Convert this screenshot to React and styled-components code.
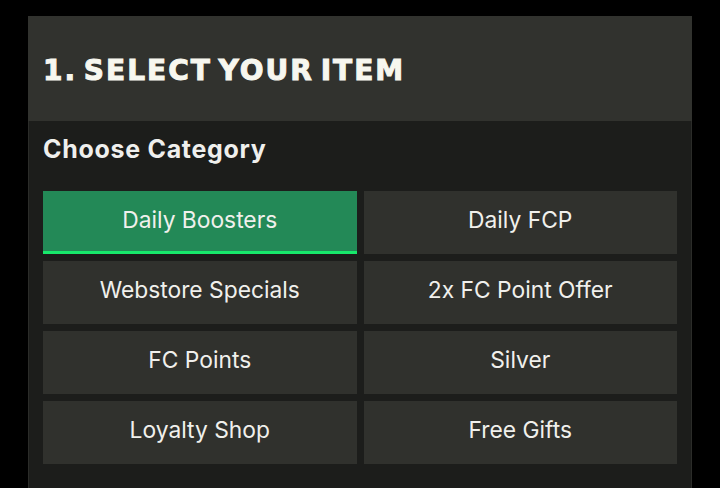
import React, { useState } from "react";
import styled, { createGlobalStyle } from "styled-components";

const GlobalStyle = createGlobalStyle`
  html, body {
    margin: 0;
    padding: 0;
    background: #000;
  }
  body {
    font-family: Inter, "Noto Sans", sans-serif;
  }
`;

const categories = [
  "Daily Boosters",
  "Daily FCP",
  "Webstore Specials",
  "2x FC Point Offer",
  "FC Points",
  "Silver",
  "Loyalty Shop",
  "Free Gifts",
];

export default function App() {
  const [active, setActive] = useState("Daily Boosters");

  return (
    <>
      <GlobalStyle />
      <Page>
        <Panel>
          <Header>
            <Title>1. SELECT YOUR ITEM</Title>
          </Header>
          <Body>
            <SubTitle>Choose Category</SubTitle>
            <Grid>
              {categories.map((c) => (
                <CategoryButton
                  key={c}
                  $active={c === active}
                  onClick={() => setActive(c)}
                >
                  {c}
                </CategoryButton>
              ))}
            </Grid>
          </Body>
        </Panel>
      </Page>
    </>
  );
}

const Page = styled.div`
  width: 720px;
  height: 488px;
  overflow: hidden;
  padding: 16px 28px 0 28px;
  box-sizing: border-box;
`;

const Panel = styled.div`
  width: 664px;
  display: flex;
  flex-direction: column;
`;

const Header = styled.div`
  background-color: #31322e;
  height: 105px;
  display: flex;
  align-items: center;
  padding: 0 15px;
  box-sizing: border-box;
`;

const Title = styled.h1`
  margin: 0;
  font-family: "DejaVu Sans", sans-serif;
  font-weight: 700;
  font-size: 28px;
  letter-spacing: 2px;
  word-spacing: -5px;
  color: #f7f7ef;
  -webkit-text-stroke: 1px #f7f7ef;
  line-height: 1;
  padding-top: 5px;
`;

const Body = styled.div`
  background-color: #1c1d1b;
  border: 1px solid #2b2c29;
  border-top: none;
  border-bottom: none;
  padding: 11px 14px 40px 14px;
  box-sizing: border-box;
`;

const SubTitle = styled.h2`
  margin: 0 0 25px 0;
  font-family: Inter, sans-serif;
  font-weight: 700;
  font-size: 25px;
  letter-spacing: 0.7px;
  line-height: 34px;
  color: #efefed;
`;

const Grid = styled.div`
  display: grid;
  grid-template-columns: 1fr 1fr;
  gap: 7px;
`;

const CategoryButton = styled.button`
  height: 63px;
  border: none;
  border-bottom: 3px solid ${(p) => (p.$active ? "#17e86b" : "transparent")};
  background-color: ${(p) => (p.$active ? "#238957" : "#30312d")};
  color: #f0f0ec;
  font-family: Inter, sans-serif;
  font-size: 22.8px;
  font-weight: 400;
  padding: 0 0 4px 0;
  box-sizing: border-box;
  cursor: pointer;
`;
